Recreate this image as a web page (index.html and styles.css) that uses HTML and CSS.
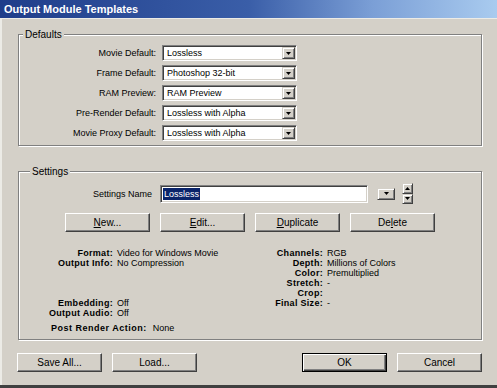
FILE: index.html
```html
<!DOCTYPE html>
<html>
<head>
<meta charset="utf-8">
<link rel="stylesheet" href="styles.css">
</head>
<body>
<div class="window">
  <div class="titlebar">Output Module Templates</div>
  <div class="body">
    <div class="group defaults">
      <span class="legend">Defaults</span>
      <div class="row"><span class="label">Movie Default:</span><div class="select"><span class="sel-text">Lossless</span><span class="drop"><svg width="5" height="3" viewBox="0 0 5 3"><polygon points="0,0 5,0 2.5,3" fill="#000"/></svg></span></div></div>
      <div class="row"><span class="label">Frame Default:</span><div class="select"><span class="sel-text">Photoshop 32-bit</span><span class="drop"><svg width="5" height="3" viewBox="0 0 5 3"><polygon points="0,0 5,0 2.5,3" fill="#000"/></svg></span></div></div>
      <div class="row"><span class="label">RAM Preview:</span><div class="select"><span class="sel-text">RAM Preview</span><span class="drop"><svg width="5" height="3" viewBox="0 0 5 3"><polygon points="0,0 5,0 2.5,3" fill="#000"/></svg></span></div></div>
      <div class="row"><span class="label">Pre-Render Default:</span><div class="select"><span class="sel-text">Lossless with Alpha</span><span class="drop"><svg width="5" height="3" viewBox="0 0 5 3"><polygon points="0,0 5,0 2.5,3" fill="#000"/></svg></span></div></div>
      <div class="row"><span class="label">Movie Proxy Default:</span><div class="select"><span class="sel-text">Lossless with Alpha</span><span class="drop"><svg width="5" height="3" viewBox="0 0 5 3"><polygon points="0,0 5,0 2.5,3" fill="#000"/></svg></span></div></div>
    </div>

    <div class="group settings">
      <span class="legend">Settings</span>
      <div class="name-row">
        <span class="name-label">Settings Name</span>
        <div class="textbox"><span class="selected">Lossless</span></div>
        <span class="mini-drop"><svg width="5" height="3" viewBox="0 0 5 3"><polygon points="0,0 5,0 2.5,3" fill="#000"/></svg></span>
        <div class="spin">
          <span class="spin-btn"><svg width="5" height="3" viewBox="0 0 5 3"><polygon points="0,3 5,3 2.5,0" fill="#000"/></svg></span>
          <span class="spin-btn"><svg width="5" height="3" viewBox="0 0 5 3"><polygon points="0,0 5,0 2.5,3" fill="#000"/></svg></span>
        </div>
      </div>
      <div class="btn-row">
        <span class="btn"><u>N</u>ew...</span>
        <span class="btn"><u>E</u>dit...</span>
        <span class="btn"><u>D</u>uplicate</span>
        <span class="btn">De<u>l</u>ete</span>
      </div>
      <div class="info">
        <div class="info-col left">
          <span class="k">Format:</span><span class="v">Video for Windows Movie</span>
          <span class="k">Output Info:</span><span class="v">No Compression</span>
          <span class="k"></span><span class="v"></span>
          <span class="k"></span><span class="v"></span>
          <span class="k"></span><span class="v"></span>
          <span class="k">Embedding:</span><span class="v">Off</span>
          <span class="k">Output Audio:</span><span class="v">Off</span>
        </div>
        <div class="info-col right">
          <span class="k">Channels:</span><span class="v">RGB</span>
          <span class="k">Depth:</span><span class="v">Millions of Colors</span>
          <span class="k">Color:</span><span class="v">Premultiplied</span>
          <span class="k">Stretch:</span><span class="v">-</span>
          <span class="k">Crop:</span><span class="v"></span>
          <span class="k">Final Size:</span><span class="v">-</span>
        </div>
      </div>
      <div class="post"><span class="k">Post Render Action:</span><span class="v">None</span></div>
    </div>

    <div class="footer">
      <div class="btn-group">
        <span class="btn">Save All...</span>
        <span class="btn">Load...</span>
      </div>
      <div class="btn-group">
        <span class="btn default">OK</span>
        <span class="btn">Cancel</span>
      </div>
    </div>
  </div>
</div>
</body>
</html>
```
FILE: styles.css
```css
* { box-sizing: border-box; }
html, body { margin: 0; padding: 0; }
body {
  background: #d4d0c8;
  font-family: "Liberation Sans", Arial, sans-serif;
  font-size: 9px;
  color: #000;
}
.window {
  width: 497px;
  height: 388px;
  display: flex;
  flex-direction: column;
  background: #d4d0c8;
  border-bottom: 3px solid #404040;
  box-shadow: inset 2px 0 0 #ecebe6;
}
.titlebar {
  height: 18px;
  flex: none;
  background: linear-gradient(90deg, #1f3d8a 0%, #3a5ea8 50%, #7b9fd6 75%, #a9cbef 100%);
  color: #fff;
  font-weight: bold;
  font-size: 11px;
  line-height: 18px;
  padding-left: 4px;
  box-shadow: 0 1px 0 #ecebe6;
}
.body {
  padding-left: 18px;
  display: flex;
  flex-direction: column;
}
.group {
  position: relative;
  width: 464px;
  border: 1px solid #808080;
  box-shadow: inset 1px 1px 0 #fff, 1px 1px 0 #fff;
}
.legend {
  position: absolute;
  top: -6px;
  left: 4px;
  padding: 0 2px;
  background: #d4d0c8;
  line-height: 11px;
  font-size: 10px;
}
.settings .legend { left: 11px; }
.defaults {
  margin-top: 16px;
  height: 112px;
  padding-top: 10px;
  display: flex;
  flex-direction: column;
  gap: 4px;
}
.row {
  display: flex;
  align-items: center;
  height: 16px;
}
.label {
  width: 137px;
  text-align: right;
  margin-right: 6px;
  white-space: nowrap;
}
.select {
  width: 135px;
  height: 16px;
  background: #fff;
  border: 1px solid;
  border-color: #808080 #fff #fff #808080;
  box-shadow: inset 1px 1px 0 #404040, inset -1px -1px 0 #d4d0c8;
  padding: 1px;
  display: flex;
  align-items: center;
}
.sel-text {
  flex: 1;
  padding-left: 3px;
  line-height: 12px;
  white-space: nowrap;
}
.drop, .mini-drop, .spin-btn {
  background: #d4d0c8;
  border: 1px solid;
  border-color: #d4d0c8 #404040 #404040 #d4d0c8;
  box-shadow: inset 1px 1px 0 #fff, inset -1px -1px 0 #808080;
  display: flex;
  align-items: center;
  justify-content: center;
}
.drop { width: 13px; height: 12px; }
.drop svg, .mini-drop svg, .spin-btn svg { display: block; }

.settings {
  margin-top: 25px;
  height: 169px;
  padding-top: 11px;
  display: flex;
  flex-direction: column;
}
.name-row {
  display: flex;
  align-items: center;
  height: 21px;
}
.name-label {
  width: 133px;
  text-align: right;
  margin-right: 8px;
}
.textbox {
  width: 208px;
  height: 18px;
  background: #fff;
  border: 1px solid;
  border-color: #808080 #fff #fff #808080;
  box-shadow: inset 1px 1px 0 #404040, inset -1px -1px 0 #d4d0c8;
  padding: 2px 2px;
  display: flex;
  align-items: center;
}
.selected {
  background: #0a246a;
  color: #fff;
  line-height: 12px;
  padding: 0 1px;
}
.mini-drop {
  width: 18px;
  height: 12px;
  margin-left: 9px;
}
.spin {
  margin-left: 7px;
  width: 11px;
  height: 21px;
  display: flex;
  flex-direction: column;
}
.spin-btn { width: 11px; height: 10.5px; }

.btn-row {
  display: flex;
  gap: 10px;
  margin-top: 9px;
  margin-left: 46px;
}
.btn {
  width: 85px;
  height: 19px;
  background: #d4d0c8;
  border: 1px solid;
  border-color: #fff #404040 #404040 #fff;
  box-shadow: inset -1px -1px 0 #808080;
  display: flex;
  align-items: center;
  justify-content: center;
  font-size: 10px;
  line-height: 12px;
}
.btn u { text-decoration: underline; }
.btn.default {
  border: 1px solid #000;
  box-shadow: inset 1px 1px 0 #fff, inset -1px -1px 0 #404040, inset -2px -2px 0 #808080;
}

.info {
  display: flex;
  margin-top: 16px;
}
.info-col {
  display: grid;
  grid-auto-rows: 10px;
  column-gap: 4px;
  line-height: 10px;
  align-content: start;
}
.info-col.left {
  grid-template-columns: 94px 132px;
}
.info-col.right {
  grid-template-columns: 74px 120px;
}
.k {
  font-weight: bold;
  text-align: right;
  white-space: nowrap;
  letter-spacing: 0.3px;
}
.v { white-space: nowrap; }
.post {
  margin-top: 5px;
  margin-left: 32px;
  line-height: 10px;
  display: flex;
  gap: 6px;
}
.post .k { letter-spacing: 0.5px; }

.footer {
  margin-top: 13px;
  margin-left: -1px;
  width: 465px;
  display: flex;
  justify-content: space-between;
}
.btn-group {
  display: flex;
  gap: 10px;
}
```
